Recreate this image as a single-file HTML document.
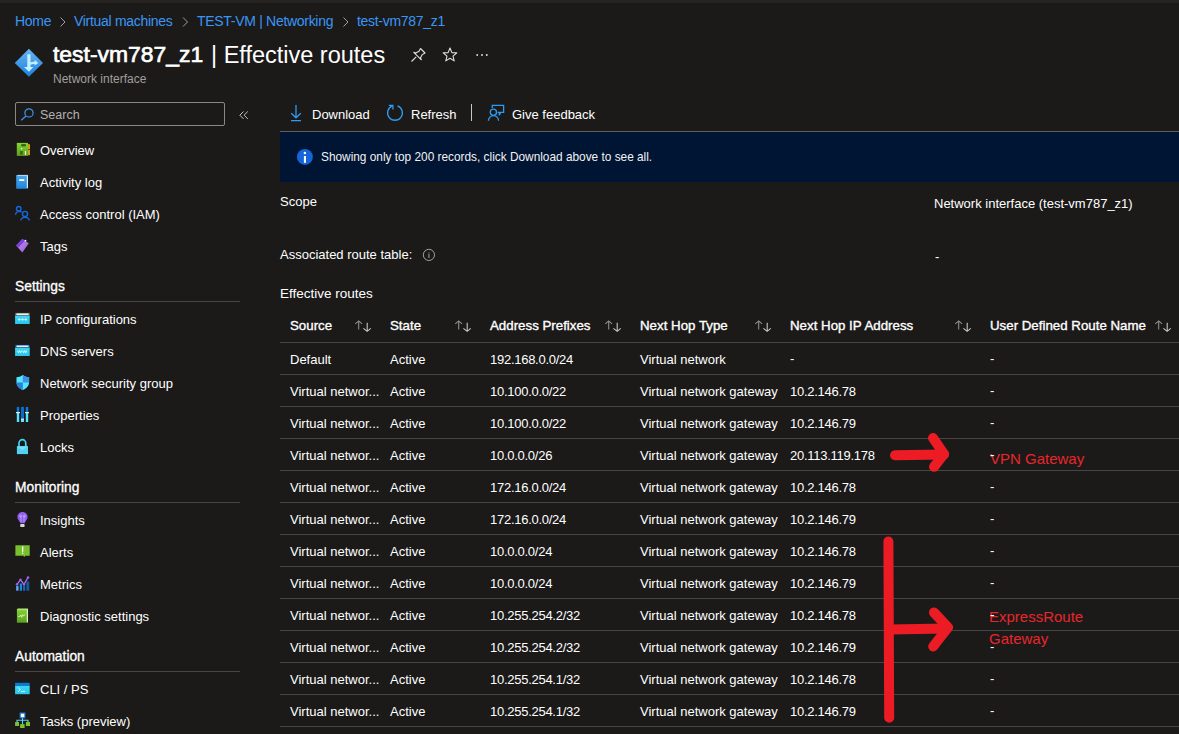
<!DOCTYPE html>
<html><head><meta charset="utf-8">
<style>
html,body{margin:0;padding:0;}
body{width:1179px;height:734px;overflow:hidden;background:#1b1a19;position:relative;font-family:"Liberation Sans",sans-serif;color:#ffffff;}
.a{position:absolute;white-space:nowrap;line-height:1;}
.t13{font-size:13px;}
.link{color:#3a96f5;font-size:14px;letter-spacing:-0.3px;}
.chev{color:#a19f9d;}
.hd{font-size:13.3px;-webkit-text-stroke:0.35px #ffffff;}
.sec{font-size:13.8px;-webkit-text-stroke:0.3px #ffffff;}
.hl{position:absolute;height:1px;background:#484644;}
svg{position:absolute;overflow:visible;}
</style></head>
<body>
<div style="position:absolute;left:0;top:0;width:1179px;height:3px;background:#252423"></div>

<!-- breadcrumb -->
<div class="a t13 link" style="left:15px;top:14.3px">Home</div>
<div class="a t13 link" style="left:74px;top:14.3px">Virtual machines</div>
<div class="a t13 link" style="left:197px;top:14.3px">TEST-VM | Networking</div>
<div class="a t13 link" style="left:357px;top:14.3px">test-vm787_z1</div>

<!-- title -->
<div class="a" style="left:53px;top:43px;font-size:22.9px;-webkit-text-stroke:0.7px #fff;color:#fff">test-vm787_z1</div>
<div class="a" style="left:211px;top:43.5px;font-size:23.5px;color:#fff">| Effective routes</div>
<div class="a" style="left:53px;top:73px;font-size:12px;color:#a19f9d">Network interface</div>

<!-- search -->
<div style="position:absolute;left:15px;top:102px;width:208px;height:22px;border:1px solid #8a8886;border-radius:2px"></div>
<div class="a" style="left:40px;top:109px;font-size:12.5px;color:#b3b0ad">Search</div>

<!-- toolbar -->
<div class="a t13" style="left:312px;top:108px">Download</div>
<div class="a t13" style="left:411px;top:108px">Refresh</div>
<div class="a t13" style="left:512px;top:108px">Give feedback</div>
<div style="position:absolute;left:471px;top:104px;width:1px;height:17px;background:#c8c6c4"></div>
<div class="hl" style="left:280px;top:131px;width:899px;background:#605e5c"></div>

<!-- info bar -->
<div style="position:absolute;left:280px;top:132px;width:899px;height:50px;background:#001433"></div>
<div class="a" style="left:321px;top:152px;font-size:11.85px;color:#f3f2f1">Showing only top 200 records, click Download above to see all.</div>

<!-- fields -->
<div class="a t13" style="left:280px;top:195px">Scope</div>
<div class="a t13" style="left:934px;top:197px">Network interface (test-vm787_z1)</div>
<div class="a t13" style="left:280px;top:248px">Associated route table:</div>
<div class="a t13" style="left:935px;top:250px">-</div>
<div class="a" style="left:280px;top:286.5px;font-size:13.5px">Effective routes</div>

<div id="table">
<div class="a hd" style="left:290px;top:319px">Source</div>
<div class="a hd" style="left:390px;top:319px">State</div>
<div class="a hd" style="left:490px;top:319px">Address Prefixes</div>
<div class="a hd" style="left:640px;top:319px">Next Hop Type</div>
<div class="a hd" style="left:790px;top:319px">Next Hop IP Address</div>
<div class="a hd" style="left:990px;top:319px">User Defined Route Name</div>
<svg width="16" height="12" style="left:355px;top:320px" viewBox="0 0 16 12"><path d="M3.7 9.4V1 M0.3 3.8L3.7 0.9L7.1 3.8" fill="none" stroke="#8f8d8b" stroke-width="1.1"/><path d="M12.2 2.8V11.4 M8.4 8.4L12.2 11.4L15.7 8.4" fill="none" stroke="#c8c6c4" stroke-width="1.1"/></svg>
<svg width="16" height="12" style="left:455px;top:320px" viewBox="0 0 16 12"><path d="M3.7 9.4V1 M0.3 3.8L3.7 0.9L7.1 3.8" fill="none" stroke="#8f8d8b" stroke-width="1.1"/><path d="M12.2 2.8V11.4 M8.4 8.4L12.2 11.4L15.7 8.4" fill="none" stroke="#c8c6c4" stroke-width="1.1"/></svg>
<svg width="16" height="12" style="left:605px;top:320px" viewBox="0 0 16 12"><path d="M3.7 9.4V1 M0.3 3.8L3.7 0.9L7.1 3.8" fill="none" stroke="#8f8d8b" stroke-width="1.1"/><path d="M12.2 2.8V11.4 M8.4 8.4L12.2 11.4L15.7 8.4" fill="none" stroke="#c8c6c4" stroke-width="1.1"/></svg>
<svg width="16" height="12" style="left:755px;top:320px" viewBox="0 0 16 12"><path d="M3.7 9.4V1 M0.3 3.8L3.7 0.9L7.1 3.8" fill="none" stroke="#8f8d8b" stroke-width="1.1"/><path d="M12.2 2.8V11.4 M8.4 8.4L12.2 11.4L15.7 8.4" fill="none" stroke="#c8c6c4" stroke-width="1.1"/></svg>
<svg width="16" height="12" style="left:955px;top:320px" viewBox="0 0 16 12"><path d="M3.7 9.4V1 M0.3 3.8L3.7 0.9L7.1 3.8" fill="none" stroke="#8f8d8b" stroke-width="1.1"/><path d="M12.2 2.8V11.4 M8.4 8.4L12.2 11.4L15.7 8.4" fill="none" stroke="#c8c6c4" stroke-width="1.1"/></svg>
<svg width="16" height="12" style="left:1155px;top:320px" viewBox="0 0 16 12"><path d="M3.7 9.4V1 M0.3 3.8L3.7 0.9L7.1 3.8" fill="none" stroke="#8f8d8b" stroke-width="1.1"/><path d="M12.2 2.8V11.4 M8.4 8.4L12.2 11.4L15.7 8.4" fill="none" stroke="#c8c6c4" stroke-width="1.1"/></svg>
<div class="hl" style="left:280px;top:342px;width:899px"></div>
<div class="a t13" style="left:290px;top:353px">Default</div>
<div class="a t13" style="left:390px;top:353px">Active</div>
<div class="a t13" style="left:490px;top:353px;letter-spacing:-0.27px">192.168.0.0/24</div>
<div class="a t13" style="left:640px;top:353px">Virtual network</div>
<div class="a t13" style="left:790px;top:352px">-</div>
<div class="a t13" style="left:990px;top:352px">-</div>
<div class="hl" style="left:280px;top:374px;width:899px"></div>
<div class="a t13" style="left:290px;top:385px">Virtual networ...</div>
<div class="a t13" style="left:390px;top:385px">Active</div>
<div class="a t13" style="left:490px;top:385px;letter-spacing:-0.27px">10.100.0.0/22</div>
<div class="a t13" style="left:640px;top:385px">Virtual network gateway</div>
<div class="a t13" style="left:790px;top:385px;letter-spacing:-0.27px">10.2.146.78</div>
<div class="a t13" style="left:990px;top:384px">-</div>
<div class="hl" style="left:280px;top:406px;width:899px"></div>
<div class="a t13" style="left:290px;top:417px">Virtual networ...</div>
<div class="a t13" style="left:390px;top:417px">Active</div>
<div class="a t13" style="left:490px;top:417px;letter-spacing:-0.27px">10.100.0.0/22</div>
<div class="a t13" style="left:640px;top:417px">Virtual network gateway</div>
<div class="a t13" style="left:790px;top:417px;letter-spacing:-0.27px">10.2.146.79</div>
<div class="a t13" style="left:990px;top:416px">-</div>
<div class="hl" style="left:280px;top:438px;width:899px"></div>
<div class="a t13" style="left:290px;top:449px">Virtual networ...</div>
<div class="a t13" style="left:390px;top:449px">Active</div>
<div class="a t13" style="left:490px;top:449px;letter-spacing:-0.27px">10.0.0.0/26</div>
<div class="a t13" style="left:640px;top:449px">Virtual network gateway</div>
<div class="a t13" style="left:790px;top:449px;letter-spacing:-0.27px">20.113.119.178</div>
<div class="a t13" style="left:990px;top:448px">-</div>
<div class="hl" style="left:280px;top:470px;width:899px"></div>
<div class="a t13" style="left:290px;top:481px">Virtual networ...</div>
<div class="a t13" style="left:390px;top:481px">Active</div>
<div class="a t13" style="left:490px;top:481px;letter-spacing:-0.27px">172.16.0.0/24</div>
<div class="a t13" style="left:640px;top:481px">Virtual network gateway</div>
<div class="a t13" style="left:790px;top:481px;letter-spacing:-0.27px">10.2.146.78</div>
<div class="a t13" style="left:990px;top:480px">-</div>
<div class="hl" style="left:280px;top:502px;width:899px"></div>
<div class="a t13" style="left:290px;top:513px">Virtual networ...</div>
<div class="a t13" style="left:390px;top:513px">Active</div>
<div class="a t13" style="left:490px;top:513px;letter-spacing:-0.27px">172.16.0.0/24</div>
<div class="a t13" style="left:640px;top:513px">Virtual network gateway</div>
<div class="a t13" style="left:790px;top:513px;letter-spacing:-0.27px">10.2.146.79</div>
<div class="a t13" style="left:990px;top:512px">-</div>
<div class="hl" style="left:280px;top:534px;width:899px"></div>
<div class="a t13" style="left:290px;top:545px">Virtual networ...</div>
<div class="a t13" style="left:390px;top:545px">Active</div>
<div class="a t13" style="left:490px;top:545px;letter-spacing:-0.27px">10.0.0.0/24</div>
<div class="a t13" style="left:640px;top:545px">Virtual network gateway</div>
<div class="a t13" style="left:790px;top:545px;letter-spacing:-0.27px">10.2.146.78</div>
<div class="a t13" style="left:990px;top:544px">-</div>
<div class="hl" style="left:280px;top:566px;width:899px"></div>
<div class="a t13" style="left:290px;top:577px">Virtual networ...</div>
<div class="a t13" style="left:390px;top:577px">Active</div>
<div class="a t13" style="left:490px;top:577px;letter-spacing:-0.27px">10.0.0.0/24</div>
<div class="a t13" style="left:640px;top:577px">Virtual network gateway</div>
<div class="a t13" style="left:790px;top:577px;letter-spacing:-0.27px">10.2.146.79</div>
<div class="a t13" style="left:990px;top:576px">-</div>
<div class="hl" style="left:280px;top:598px;width:899px"></div>
<div class="a t13" style="left:290px;top:609px">Virtual networ...</div>
<div class="a t13" style="left:390px;top:609px">Active</div>
<div class="a t13" style="left:490px;top:609px;letter-spacing:-0.27px">10.255.254.2/32</div>
<div class="a t13" style="left:640px;top:609px">Virtual network gateway</div>
<div class="a t13" style="left:790px;top:609px;letter-spacing:-0.27px">10.2.146.78</div>
<div class="a t13" style="left:990px;top:608px">-</div>
<div class="hl" style="left:280px;top:630px;width:899px"></div>
<div class="a t13" style="left:290px;top:641px">Virtual networ...</div>
<div class="a t13" style="left:390px;top:641px">Active</div>
<div class="a t13" style="left:490px;top:641px;letter-spacing:-0.27px">10.255.254.2/32</div>
<div class="a t13" style="left:640px;top:641px">Virtual network gateway</div>
<div class="a t13" style="left:790px;top:641px;letter-spacing:-0.27px">10.2.146.79</div>
<div class="a t13" style="left:990px;top:640px">-</div>
<div class="hl" style="left:280px;top:662px;width:899px"></div>
<div class="a t13" style="left:290px;top:673px">Virtual networ...</div>
<div class="a t13" style="left:390px;top:673px">Active</div>
<div class="a t13" style="left:490px;top:673px;letter-spacing:-0.27px">10.255.254.1/32</div>
<div class="a t13" style="left:640px;top:673px">Virtual network gateway</div>
<div class="a t13" style="left:790px;top:673px;letter-spacing:-0.27px">10.2.146.78</div>
<div class="a t13" style="left:990px;top:672px">-</div>
<div class="hl" style="left:280px;top:694px;width:899px"></div>
<div class="a t13" style="left:290px;top:705px">Virtual networ...</div>
<div class="a t13" style="left:390px;top:705px">Active</div>
<div class="a t13" style="left:490px;top:705px;letter-spacing:-0.27px">10.255.254.1/32</div>
<div class="a t13" style="left:640px;top:705px">Virtual network gateway</div>
<div class="a t13" style="left:790px;top:705px;letter-spacing:-0.27px">10.2.146.79</div>
<div class="a t13" style="left:990px;top:704px">-</div>
<div class="hl" style="left:280px;top:726px;width:899px"></div>
</div>
<div id="sidebar">
<div class="a t13" style="left:40px;top:144px">Overview</div>
<div class="a t13" style="left:40px;top:176px">Activity log</div>
<div class="a t13" style="left:40px;top:208px">Access control (IAM)</div>
<div class="a t13" style="left:40px;top:240px">Tags</div>
<div class="a t13" style="left:40px;top:313px">IP configurations</div>
<div class="a t13" style="left:40px;top:345px">DNS servers</div>
<div class="a t13" style="left:40px;top:377px">Network security group</div>
<div class="a t13" style="left:40px;top:409px">Properties</div>
<div class="a t13" style="left:40px;top:441px">Locks</div>
<div class="a t13" style="left:40px;top:514px">Insights</div>
<div class="a t13" style="left:40px;top:546px">Alerts</div>
<div class="a t13" style="left:40px;top:578px">Metrics</div>
<div class="a t13" style="left:40px;top:610px">Diagnostic settings</div>
<div class="a t13" style="left:40px;top:683px">CLI / PS</div>
<div class="a t13" style="left:40px;top:715px">Tasks (preview)</div>
<div class="a sec" style="left:15px;top:280px">Settings</div>
<div class="hl" style="left:15px;top:301px;width:225px"></div>
<div class="a sec" style="left:15px;top:481px">Monitoring</div>
<div class="hl" style="left:15px;top:502px;width:225px"></div>
<div class="a sec" style="left:15px;top:650px">Automation</div>
<div class="hl" style="left:15px;top:671px;width:225px"></div>
</div>
<div id="icons">
<svg width="1179" height="734" style="left:0;top:0" viewBox="0 0 1179 734">
<defs>
<linearGradient id="gDia" x1="0" y1="0" x2="0" y2="1"><stop offset="0" stop-color="#6ab2f2"/><stop offset="1" stop-color="#1a82de"/></linearGradient>
<linearGradient id="gGreen" x1="0" y1="0" x2="0" y2="1"><stop offset="0" stop-color="#86d633"/><stop offset="1" stop-color="#5c9f1f"/></linearGradient>
<linearGradient id="gBlue" x1="0" y1="0" x2="0" y2="1"><stop offset="0" stop-color="#4ea8ee"/><stop offset="1" stop-color="#1e86dc"/></linearGradient>
<linearGradient id="gPurp" x1="0" y1="0" x2="1" y2="1"><stop offset="0" stop-color="#c08ae8"/><stop offset="1" stop-color="#9a62dc"/></linearGradient>
<linearGradient id="gCyan" x1="0" y1="0" x2="0" y2="1"><stop offset="0" stop-color="#3ad8f8"/><stop offset="1" stop-color="#2cc4ea"/></linearGradient>
<clipPath id="cShield"><path d="M22.8 375 C20.6 376.6 18.6 377.2 16.5 377.2 V382.2 C16.5 386 19.3 388.6 22.8 390 C26.3 388.6 29.1 386 29.1 382.2 V377.2 C27 377.2 25 376.6 22.8 375 Z"/></clipPath>
</defs>
<!-- breadcrumb chevrons -->
<g fill="none" stroke="#a19f9d" stroke-width="1">
<path d="M60.5 17.5 L65 22 L60.5 26.5"/>
<path d="M183 17.5 L187.5 22 L183 26.5"/>
<path d="M343.5 17.5 L348 22 L343.5 26.5"/>
</g>
<!-- diamond icon -->
<path d="M28.9 48.8 L43 62.9 L28.9 76.8 L14.8 62.9 Z" fill="url(#gDia)"/>
<g fill="#c3f1ff">
<rect x="27.3" y="54.3" width="3.2" height="13"/>
<path d="M24 67 L33.5 67 L28.9 71.8 Z"/>
<path d="M34.7 59.8 L38.2 62.9 L34.7 65.6 Z"/>
</g>
<path d="M30 64 Q31.5 62.6 35.5 62.9" fill="none" stroke="#c3f1ff" stroke-width="2.2"/>
<!-- pin / star / more -->
<g fill="none" stroke="#e1dfdd" stroke-width="1.1" stroke-linejoin="round">
<path d="M411.5 61.5 L416.2 56.8"/>
<path d="M420.5 48.5 L425 53 L422.3 54.6 L420.5 57.8 L421.3 59.8 L413.8 52.3 L415.8 53.1 L419 51.3 Z"/>
<path d="M450 48 L451.9 52.6 L456.8 52.9 L453 56.1 L454.2 60.9 L450 58.3 L445.8 60.9 L447 56.1 L443.2 52.9 L448.1 52.6 Z"/>
</g>
<g fill="#e1dfdd"><circle cx="477.2" cy="55" r="0.95"/><circle cx="482" cy="55" r="0.95"/><circle cx="486.8" cy="55" r="0.95"/></g>
<!-- search icon -->
<g fill="none" stroke="#3a96f5" stroke-width="1.2">
<circle cx="29" cy="112.9" r="4.1"/>
<path d="M26 116 L21.2 120.3"/>
</g>
<!-- collapse << -->
<g fill="none" stroke="#c8c6c4" stroke-width="1">
<path d="M243.5 111.5 L239.8 115.2 L243.5 118.9"/>
<path d="M247.8 111.5 L244.1 115.2 L247.8 118.9"/>
</g>
<!-- toolbar icons -->
<g fill="none" stroke="#2f9af2" stroke-width="1.3">
<path d="M296 105 V117.3 M291.2 113.3 L296 117.8 L300.8 113.3 M291 120.6 H301"/>
<path d="M397.6 105.9 A7.4 7.4 0 1 1 392.4 105.9"/>
<path d="M388.8 105.4 H392.9 V109.6"/>
<circle cx="493.4" cy="112.2" r="3.1"/>
<path d="M488.4 120.8 A5.1 5.2 0 0 1 498.6 120.8"/>
<path d="M492.3 108 V105.4 H503.6 V112.4 H500.6 L499.3 115.3 V112.4 H497.6"/>
</g>
<!-- info bar icon -->
<circle cx="304.9" cy="156.9" r="8" fill="#1565d8"/>
<circle cx="304.9" cy="153" r="1.25" fill="#fff"/>
<rect x="303.9" y="156" width="2.1" height="6.8" fill="#fff"/>
<!-- associated info icon -->
<circle cx="428.9" cy="254.9" r="5.6" fill="none" stroke="#a19f9d" stroke-width="1"/>
<rect x="428.4" y="252.6" width="1.1" height="0.9" fill="#a19f9d"/>
<rect x="428.4" y="254.2" width="1.1" height="3.6" fill="#a19f9d"/>

<!-- sidebar icons -->
<!-- overview -->
<rect x="16.8" y="142.9" width="11.2" height="13" fill="url(#gGreen)"/>
<rect x="28" y="144.2" width="2" height="5.2" fill="#d0a20e"/>
<rect x="28" y="150" width="2" height="5.2" fill="#d0a20e"/>
<rect x="21.3" y="144.2" width="4.5" height="2.1" fill="#2e5a0c"/>
<rect x="20" y="151" width="2.8" height="3.7" fill="#3b6e14"/>
<rect x="24.9" y="151" width="1.2" height="4" fill="#e8f5d8"/>
<circle cx="21.6" cy="148.7" r="0.8" fill="#f0fff0"/>
<!-- activity log -->
<rect x="16.2" y="174.9" width="11.8" height="13.9" rx="0.6" fill="url(#gBlue)"/>
<rect x="26.8" y="175.6" width="1.2" height="12.4" fill="#d8ecfa"/>
<rect x="17.5" y="174.9" width="10.5" height="1" fill="#b8dcf8"/>
<rect x="19.2" y="179.2" width="5.1" height="1.8" fill="#fff"/>
<!-- IAM -->
<g fill="none" stroke="#1767dc" stroke-width="1.4">
<circle cx="18.75" cy="208.8" r="2.25"/>
<path d="M15.6 214.9 A3.6 3.4 0 0 1 21.6 212.2"/>
<circle cx="25" cy="213.9" r="2.55"/>
<path d="M20.9 220.6 A4.2 3.4 0 0 1 29.3 220.6"/>
</g>
<!-- tags -->
<path d="M16.2 245.5 L22.3 239 L28.8 243.3 L22.3 252.4 Z" fill="url(#gPurp)"/>
<path d="M16.2 245.5 L22.3 239 L25 240.5 L18.5 247.6 Z" fill="#7a3ee6"/>
<circle cx="25.5" cy="240.6" r="0.9" fill="#fff"/>
<!-- IP config -->
<rect x="15.3" y="312.9" width="14.4" height="2.7" fill="#7a7a7a"/>
<rect x="16.5" y="313.5" width="12" height="1.5" fill="#f0f0f0"/>
<rect x="15.1" y="315.6" width="14.6" height="8.4" fill="url(#gCyan)"/>
<path d="M19.2 319.4 H25.8" stroke="#bff0ff" stroke-width="0.5"/>
<g fill="#f4fcff"><circle cx="19.2" cy="319.4" r="1"/><circle cx="22.5" cy="319.4" r="1"/><circle cx="25.8" cy="319.4" r="1"/></g>
<!-- DNS -->
<rect x="15.3" y="344.9" width="14.4" height="2.7" fill="#0a5cb8"/>
<rect x="16.5" y="345.5" width="12" height="1.5" fill="#f0f0f0"/>
<rect x="15.1" y="347.6" width="14.6" height="8.4" fill="url(#gCyan)"/>
<path d="M17.5 350.6 L18.5 352.8 L19.6 350.6 L20.6 352.8 L21.7 350.6 M22.6 350.6 L23.6 352.8 L24.7 350.6 L25.7 352.8 L26.8 350.6" fill="none" stroke="#e8fbff" stroke-width="0.9"/>
<!-- NSG shield -->
<g clip-path="url(#cShield)">
<rect x="16" y="374" width="14" height="17" fill="#50e6ff"/>
<rect x="22.8" y="374" width="7" height="8.5" fill="#3f8ee8"/>
<rect x="16" y="382.5" width="6.8" height="8.5" fill="#2a80e0"/>
</g>
<!-- properties -->
<rect x="16.8" y="406.9" width="2.4" height="5.6" fill="#0a7ad6"/>
<rect x="16.8" y="412.5" width="2.4" height="9.5" fill="#50e6ff"/>
<rect x="21" y="406.9" width="3" height="12.1" fill="#0a6cc8"/>
<rect x="21" y="419" width="3" height="3" fill="#50e6ff"/>
<rect x="25.8" y="406.9" width="2.4" height="5.6" fill="#0a7ad6"/>
<rect x="25.8" y="412.5" width="2.4" height="9.5" fill="#50e6ff"/>
<g fill="#e8e8e8"><rect x="16" y="412" width="4" height="1.2"/><rect x="25" y="412" width="4" height="1.2"/><rect x="21" y="418.6" width="3" height="1.2"/></g>
<!-- locks -->
<path d="M19 446.5 V443.3 A3.4 3.6 0 0 1 25.8 443.3 V446.5" fill="none" stroke="#3cd4f4" stroke-width="1.7"/>
<rect x="16.9" y="446.2" width="11.1" height="7.9" fill="#52d2f2"/>
<path d="M16.9 446.2 L22.45 450.2 L28 446.2 Z" fill="#72e2fa"/>
<!-- insights -->
<path d="M22.5 512 C25.6 512 27.6 514.3 27.6 517 C27.6 519.4 25.2 521 24.6 523.3 H20.4 C19.8 521 17.4 519.4 17.4 517 C17.4 514.3 19.4 512 22.5 512 Z" fill="#8f5ff2"/>
<path d="M21 516 V522 M24 516 V522" stroke="#c8b0f8" stroke-width="0.7"/>
<circle cx="20.6" cy="516" r="0.9" fill="none" stroke="#d8c8fa" stroke-width="0.6"/>
<circle cx="24.4" cy="516" r="0.9" fill="none" stroke="#d8c8fa" stroke-width="0.6"/>
<rect x="20.2" y="524" width="4.4" height="3" rx="0.8" fill="#d8d8cf"/>
<!-- alerts -->
<path d="M15.4 545.2 H29.7 V555.7 H25.2 L24.5 557 L23 555.7 H15.4 Z" fill="#78c02e"/>
<rect x="22" y="546.5" width="1.3" height="5.3" fill="#fff"/>
<circle cx="22.65" cy="553.3" r="0.75" fill="#fff"/>
<!-- metrics -->
<rect x="16.2" y="585.8" width="2.3" height="4.9" fill="#5eaaf8"/>
<rect x="19.8" y="583.5" width="2.2" height="7.2" fill="#1a86e0"/>
<rect x="23.1" y="585.5" width="2.1" height="5.2" fill="#136cc4"/>
<rect x="26.4" y="581.5" width="2.8" height="9.2" fill="#165aa6"/>
<path d="M17 584.3 L20.5 579.8 L24 584.3 L28 577.5" fill="none" stroke="#a878f4" stroke-width="1.3"/>
<g fill="#9a62f2"><circle cx="17" cy="584.3" r="1.2"/><circle cx="20.5" cy="579.8" r="1.2"/><circle cx="24" cy="584.3" r="1.2"/><circle cx="28" cy="577.5" r="1.3"/></g>
<!-- diagnostic -->
<rect x="16.9" y="608.7" width="11.1" height="14" fill="url(#gGreen)"/>
<rect x="26.8" y="609.2" width="1.2" height="13" fill="#e0f0c8"/>
<rect x="18" y="608.7" width="10" height="0.9" fill="#d0ecb0"/>
<path d="M18.2 616.5 L19.7 616.5 L20.7 615 L21.6 617.3 L22.6 614.5 L23.6 616 L25.3 614.4" fill="none" stroke="#e8f8d8" stroke-width="0.8"/>
<!-- CLI -->
<rect x="15.1" y="682.8" width="14.6" height="3" fill="#0a78d8"/>
<rect x="15.1" y="685.8" width="14.6" height="8.4" fill="url(#gCyan)"/>
<path d="M18.2 687.4 L20.2 689.6 L18.2 691.8" fill="none" stroke="#e8fbff" stroke-width="0.9"/>
<rect x="21" y="690.9" width="4" height="1.2" fill="#b8eefa"/>
<!-- tasks -->
<rect x="20.2" y="713.1" width="4.7" height="4.7" fill="#fff" stroke="#1a78e0" stroke-width="1.1"/>
<path d="M22.5 718 V724.5 M17 722 V720.3 H28 V722" fill="none" stroke="#50d8f0" stroke-width="1.1"/>
<rect x="15.1" y="722" width="3.9" height="4" fill="#7cc230"/>
<rect x="20.1" y="724.1" width="4.5" height="3.9" fill="#7cc230"/>
<rect x="25.9" y="722" width="4.1" height="4" fill="#7cc230"/>

<!-- red annotations -->
<g fill="none" stroke="#ed1c24" stroke-width="10" stroke-linecap="round" stroke-linejoin="round">
<path d="M895 455.2 L944 454.5"/>
<path d="M933 438 L944 454 L934 466.8"/>
<path d="M888.4 541.5 L889.2 717.7"/>
<path d="M889 629.5 L947 628.5"/>
<path d="M934 612.5 L948 627.5 L933.2 646.5"/>
</g>
</svg>
<div class="a" style="left:990px;top:451px;font-size:15px;color:#e8262c">VPN Gateway</div>
<div class="a" style="left:989px;top:609px;font-size:15px;color:#e8262c">ExpressRoute</div>
<div class="a" style="left:989px;top:630.5px;font-size:15px;color:#e8262c">Gateway</div>
<div class="a t13" style="left:990px;top:448px">-</div>
<div class="a t13" style="left:990px;top:608px">-</div>
</div>
</body></html>
